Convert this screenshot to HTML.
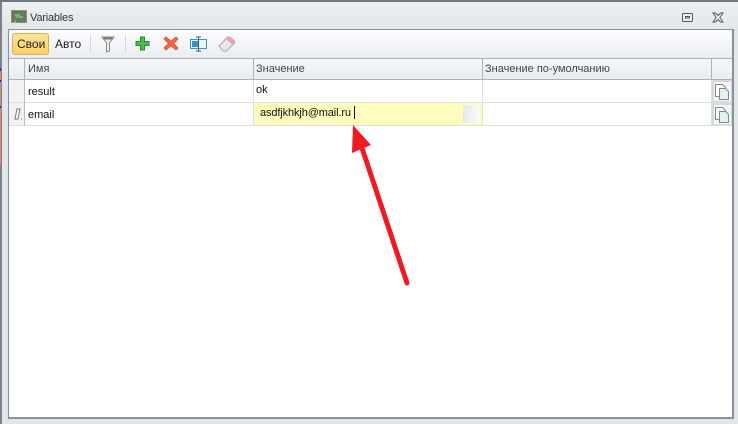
<!DOCTYPE html>
<html><head><meta charset="utf-8"><style>
html,body{margin:0;padding:0;width:738px;height:424px;overflow:hidden;background:#e2e6ea;font-family:"Liberation Sans",sans-serif;font-size:11px;color:#1e1e1e}
.a{position:absolute}
.t{position:absolute;white-space:nowrap;line-height:14px}
</style></head><body>
<div class="a" style="left:0;top:0;width:738px;height:2px;background:#6f7880"></div>
<div class="a" style="left:0;top:2px;width:2px;height:422px;background:#7c8288"></div>
<div class="a" style="left:0;top:70px;width:1px;height:95px;background:#e8836f"></div>
<div class="a" style="left:0;top:68px;width:1px;height:3px;background:#2030d0"></div>
<div class="a" style="left:0;top:80px;width:1px;height:2px;background:#2030d0"></div>
<div class="a" style="left:0;top:106px;width:1px;height:2px;background:#2030d0"></div>
<div class="a" style="left:2px;top:2px;width:736px;height:28px;background:linear-gradient(#eef0f2,#e3e7ea)"></div>

<svg class="a" style="left:11px;top:10px" width="17" height="14" viewBox="0 0 17 14"><rect x=".5" y=".5" width="15" height="12" fill="#5f7f5c" stroke="#9c8a68"/><rect x="2" y="2" width="12" height="9" fill="#5d8460"/><path d="M4 5h5M5 7h7" stroke="#b6ccb0"/><path d="M3 13l2-2" stroke="#bbb"/></svg>
<div class="t" style="left:30px;top:11px;color:#333;font-size:11px;letter-spacing:-.2px">Variables</div>

<svg class="a" style="left:682px;top:13px" width="11" height="9" viewBox="0 0 11 9"><rect x=".5" y=".5" width="10" height="8" rx="1" fill="#eceef0" stroke="#555"/><rect x="3.500" y="3.500" width="4" height="1.500" fill="none" stroke="#555" stroke-width="1"/></svg>
<svg class="a" style="left:712px;top:12px" width="12" height="11" viewBox="0 0 12 11"><path d="M1 1h2.500L6 3.500 8.500 1H11L7.800 5.500 11 10H8.500L6 7.500 3.500 10H1L4.200 5.500z" fill="#f4f5f6" stroke="#555"/></svg>

<!-- panel -->
<div class="a" style="left:8px;top:29px;width:723px;height:387px;border:1px solid #8a9097;border-width:1px 2px 2px 1px;background:#fff"></div>
<div class="a" style="left:9px;top:30px;width:723px;height:28px;background:linear-gradient(#fdfdfe,#e9edf1)"></div>
<div class="a" style="left:9px;top:58px;width:723px;height:1px;background:#adb3ba"></div>

<!-- toolbar -->
<div class="a" style="left:12px;top:33px;width:37px;height:22px;box-sizing:border-box;border:1px solid #d8b356;border-radius:3px;background:linear-gradient(#fde49a,#fdd067)"></div>
<div class="t" style="left:17px;top:37px;color:#222;font-size:12px">Свои</div>
<div class="t" style="left:55px;top:37px;color:#222;font-size:12px">Авто</div>
<div class="a" style="left:90px;top:35px;width:1px;height:18px;background:#d2d6da"></div>
<div class="a" style="left:125px;top:35px;width:1px;height:18px;background:#d2d6da"></div>
<svg class="a" style="left:101px;top:36px" width="14" height="17" viewBox="0 0 14 17"><path d="M1 1h12L8.500 7v8l-3 1V7z" fill="#e9e9e9" stroke="#8a8a8a"/><path d="M2.500 2.500h9" stroke="#777" stroke-width="2"/></svg>
<svg class="a" style="left:135px;top:36px" width="15" height="15" viewBox="0 0 15 15"><path d="M5.500 1h4v4.500H14v4H9.500V14h-4V9.500H1v-4h4.500z" fill="#4cbb4c" stroke="#2a8a36"/></svg>
<svg class="a" style="left:163px;top:36px" width="16" height="15" viewBox="0 0 16 15"><path d="M1 3l2-2 5 4 5-4 2 2-4.500 4.500L15 12l-2 2-5-4-5 4-2-2 4.500-4.500z" fill="#f4664a" stroke="#dc4a30" stroke-width=".8"/></svg>
<svg class="a" style="left:190px;top:36px" width="18" height="16" viewBox="0 0 18 16"><rect x=".5" y="3.500" width="16" height="9" fill="#eaf3fa" stroke="#4a8fbe"/><rect x="2" y="5" width="6" height="6" fill="#2c96d6"/><path d="M6 1h5M8.500 1v14M6 15h5" stroke="#555" fill="none"/></svg>
<svg class="a" style="left:218px;top:36px" width="18" height="16" viewBox="0 0 18 16"><path d="M1 10l8-8.500a2 2 0 0 1 3 0l4 3a2 2 0 0 1 0 3L8.500 15H5z" fill="#e8e8e8" stroke="#aaa"/><path d="M8 3l1-1.500a2 2 0 0 1 3 0l4 3a2 2 0 0 1 0 3L15 9z" fill="#f0a0ae"/></svg>

<!-- header -->
<div class="a" style="left:9px;top:59px;width:723px;height:20px;background:linear-gradient(#f6f7f9,#e9edf1)"></div>
<div class="a" style="left:9px;top:79px;width:723px;height:1px;background:#adb3ba"></div>
<div class="a" style="left:24px;top:59px;width:1px;height:21px;background:#adb3ba"></div>
<div class="a" style="left:253px;top:59px;width:1px;height:21px;background:#adb3ba"></div>
<div class="a" style="left:482px;top:59px;width:1px;height:21px;background:#adb3ba"></div>
<div class="a" style="left:711px;top:59px;width:1px;height:21px;background:#adb3ba"></div>
<div class="t" style="left:28px;top:62px;color:#444">Имя</div>
<div class="t" style="left:256px;top:62px;color:#444">Значение</div>
<div class="t" style="left:485px;top:62px;color:#444">Значение по-умолчанию</div>

<!-- rows -->
<div class="a" style="left:9px;top:80px;width:15px;height:45px;background:#f0f2f4"></div>
<div class="a" style="left:9px;top:102px;width:723px;height:1px;background:#dcdfe2"></div>
<div class="a" style="left:9px;top:125px;width:723px;height:1px;background:#dcdfe2"></div>
<div class="a" style="left:24px;top:80px;width:1px;height:46px;background:#b9bec3"></div>
<div class="a" style="left:253px;top:80px;width:1px;height:46px;background:#dcdfe2"></div>
<div class="a" style="left:482px;top:80px;width:1px;height:46px;background:#dcdfe2"></div>
<div class="a" style="left:711px;top:80px;width:1px;height:46px;background:#dcdfe2"></div>
<div class="t" style="left:28px;top:85px;color:#111">result</div>
<div class="t" style="left:28px;top:108px;color:#111">email</div>
<div class="t" style="left:256px;top:83px;color:#111">ok</div>
<svg class="a" style="left:12px;top:107px" width="11" height="14" viewBox="0 0 11 14"><path d="M3 12L5 2h3L6 12z" fill="#fff" stroke="#777"/><path d="M9 12h1" stroke="#777"/></svg>

<!-- editor -->
<div class="a" style="left:254px;top:103px;width:228px;height:22px;background:#fefdbd"></div>
<div class="a" style="left:463px;top:105px;width:17px;height:18px;background:linear-gradient(90deg,#e8e8e8,#fbfbfb)"></div>
<div class="t" style="left:260px;top:106px;color:#111;letter-spacing:-.12px">asdfjkhkjh@mail.ru</div>
<div class="a" style="left:354px;top:106px;width:1px;height:13px;background:#111"></div>

<!-- copy buttons -->
<div class="a" style="left:712px;top:80px;width:20px;height:22px;background:#d6d9db"></div>
<div class="a" style="left:712px;top:103px;width:20px;height:22px;background:#d6d9db"></div>
<div class="a" style="left:714px;top:82px;width:17px;height:19px;background:#f4f6f6"></div>
<div class="a" style="left:714px;top:105px;width:17px;height:19px;background:#f4f6f6"></div>
<svg class="a" style="left:714px;top:83px" width="17" height="18" viewBox="0 0 17 18"><path d="M1.500 1.500h7l3 3v9h-10z" fill="#fff" stroke="#7f8a8a"/><path d="M5.500 5.500h6l3 3v8h-9z" fill="#e4f2ec" stroke="#7f8a8a"/></svg>
<svg class="a" style="left:714px;top:106px" width="17" height="18" viewBox="0 0 17 18"><path d="M1.500 1.500h7l3 3v9h-10z" fill="#fff" stroke="#7f8a8a"/><path d="M5.500 5.500h6l3 3v8h-9z" fill="#e4f2ec" stroke="#7f8a8a"/></svg>

<!-- arrow -->
<svg class="a" style="left:340px;top:120px" width="80" height="170" viewBox="0 0 80 170"><path d="M67 163L22 28" stroke="#ed1c24" stroke-width="5" stroke-linecap="round" fill="none"/><path d="M13 5L12 33 31 25z" fill="#ed1c24"/></svg>
</body></html>
